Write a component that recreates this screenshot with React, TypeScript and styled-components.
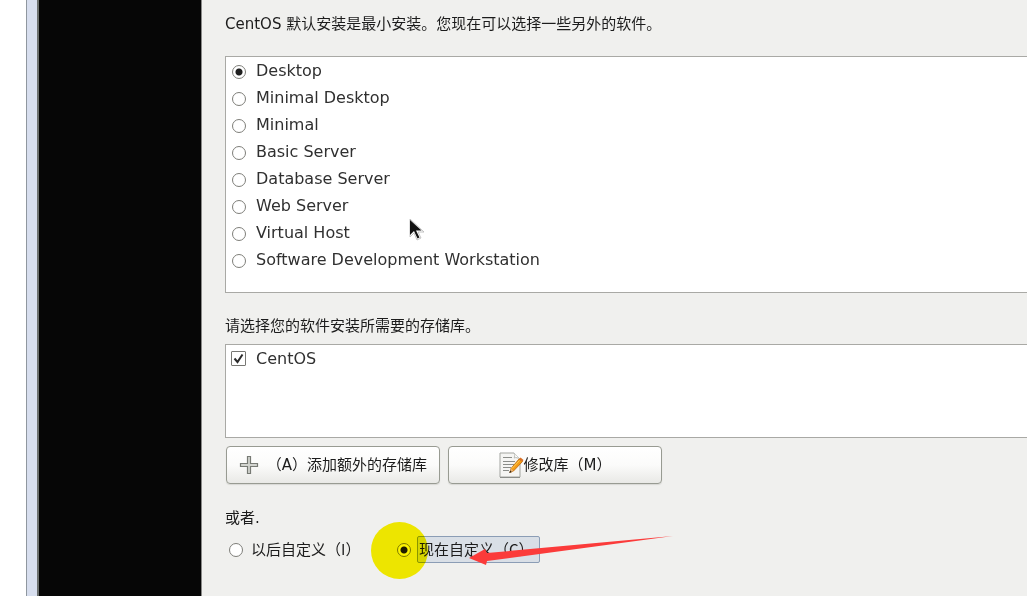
import React, { useState } from "react";
import styled, { createGlobalStyle } from "styled-components";

const GlobalStyle = createGlobalStyle`
  * { box-sizing: border-box; }
  html, body, #root { height: 100%; }
  body {
    margin: 0;
    overflow: hidden;
    background: #ffffff;
    color: #1c1c1c;
    font-family: "DejaVu Sans", "Noto Sans CJK SC", sans-serif;
    font-size: 15px;
    line-height: 20px;
  }
`;

const Screen = styled.div`
  display: flex;
  min-height: 100%;
  padding-left: 26px;
`;

const WindowFrame = styled.div`
  flex: none;
  width: 13px;
  background: #d7deee;
  border-left: 1px solid #8f979f;
  border-right: 2px solid #6c706f;
`;

const Backdrop = styled.div`
  flex: none;
  width: 162px;
  background: #060606;
`;

const Installer = styled.main`
  flex: 1;
  min-width: 0;
  display: flex;
  flex-direction: column;
  padding: 14px 0 0 23px;
  background: #f0f0ee;
  border-left: 1px solid #8a8a88;
`;

const Message = styled.p<{ $above?: number; $below: number }>`
  margin: ${(p) => p.$above ?? 0}px 0 ${(p) => p.$below}px;
  white-space: nowrap;
`;

const ListBox = styled.div<{ $height: number }>`
  position: relative;
  height: ${(p) => p.$height}px;
  background: #ffffff;
  border: 1px solid #a9a9a5;
  border-right: 0;
`;

const ListRow = styled.label`
  display: flex;
  align-items: center;
  gap: 10px;
  height: 27px;
  padding-left: 6px;
  color: #303030;
  font-size: 16px;
`;

const Radio = styled.input`
  appearance: none;
  flex: none;
  width: 14px;
  height: 14px;
  margin: 2px 0 0;
  border: 1px solid #7e7e79;
  border-radius: 50%;
  background: #ffffff;
  &:checked {
    background: radial-gradient(circle, #1f1f1f 3px, #ffffff 4px);
  }
`;

const CheckHolder = styled.span`
  position: relative;
  display: flex;
  margin-left: -1px;
  svg {
    position: absolute;
    inset: 0;
    pointer-events: none;
  }
`;

const Checkbox = styled.input`
  appearance: none;
  width: 15px;
  height: 15px;
  margin: 0;
  border: 1px solid #777773;
  border-radius: 1px;
  background: #ffffff;
`;

const Pointer = styled.svg`
  position: absolute;
  left: 183px;
  top: 162px;
`;

const Buttons = styled.div`
  display: flex;
  gap: 8px;
  margin: 8px 0 24px 1px;
`;

const PushButton = styled.button<{ $gap: number }>`
  display: flex;
  align-items: center;
  justify-content: center;
  gap: ${(p) => p.$gap}px;
  width: 214px;
  height: 38px;
  padding: 0;
  border: 1px solid #989b92;
  border-radius: 4px;
  background: linear-gradient(#ffffff, #fbfbfa 50%, #e9e9e6);
  box-shadow: 0 1px 1px #d8d8d4;
  color: #1c1c1c;
  font: inherit;
  white-space: nowrap;
`;

const Choices = styled.div`
  display: flex;
  align-items: center;
  gap: 36px;
  padding-left: 4px;
`;

const Choice = styled.label`
  position: relative;
  display: flex;
  align-items: center;
  gap: 6px;
  white-space: nowrap;
  ${Radio} { margin-top: 0; }
`;

const ChoiceText = styled.span<{ $focused?: boolean }>`
  width: ${(p) => (p.$focused ? 123 : 112)}px;
  height: 27px;
  padding: 2px 1px;
  border: 1px solid ${(p) => (p.$focused ? "#8b9db5" : "transparent")};
  border-radius: 2px;
  background: ${(p) => (p.$focused ? "#d9dfe6" : "transparent")};
  font-family: "Noto Sans CJK SC", sans-serif;
`;

const Highlight = styled.span`
  position: absolute;
  left: -26px;
  top: -14px;
  width: 57px;
  height: 57px;
  border-radius: 50%;
  background: #fcf400;
  mix-blend-mode: multiply;
  pointer-events: none;
`;

const Arrow = styled.svg`
  position: absolute;
  left: 72px;
  top: 0;
  pointer-events: none;
`;

const packages = [
  "Desktop",
  "Minimal Desktop",
  "Minimal",
  "Basic Server",
  "Database Server",
  "Web Server",
  "Virtual Host",
  "Software Development Workstation",
];

const PlusIcon = () => (
  <svg width="20" height="20" viewBox="0 0 20 20" aria-hidden="true">
    <path
      d="M8.5 1.5h3v7h7v3h-7v7h-3v-7h-7v-3h7z"
      fill="#d2d4cf"
      stroke="#777a74"
      strokeWidth="1.2"
    />
  </svg>
);

const EditIcon = () => (
  <svg width="25" height="26" viewBox="0 0 25 26" aria-hidden="true">
    <path d="M1 1h14l6 6v18H1z" fill="#f5f5f3" stroke="#a3a5a0" />
    <path d="M15 1c1 2 1 4 0 5 2-1 4 0 6 1" fill="#ffffff" stroke="#b9bbb6" />
    <path d="M4 5.500h9M4 9.500h12M4 12.500h11M4 15.500h8M4 18.500h6" stroke="#8b8d89" />
    <path d="M1 25.500h20" stroke="#8b8d89" />
    <path d="M20 7l3.500 2.500-9 9.500-3.500 1.500 1-4z" fill="#f59b16" stroke="#b8650b" strokeWidth=".8" />
    <path d="M20.500 8.500l-7.500 8" stroke="#ffd04d" />
    <path d="M12 16.500l2.500 2.500-3.500 1.500z" fill="#e6b47a" />
    <path d="M11.300 18.500l1.500 1.500-2.800 1z" fill="#33271a" />
    <path d="M20 7l1.500-1.500 3 2.500-1 1.500z" fill="#d96f25" />
  </svg>
);

export default function App() {
  const [selected, setSelected] = useState("Desktop");
  const [repo, setRepo] = useState(true);
  const [when, setWhen] = useState("now");

  return (
    <>
      <GlobalStyle />
      <Screen>
        <WindowFrame />
        <Backdrop />
        <Installer>
          <Message $below={22}>CentOS 默认安装是最小安装。您现在可以选择一些另外的软件。</Message>
          <ListBox $height={237} role="radiogroup">
            {packages.map((name) => (
              <ListRow key={name}>
                <Radio
                  type="radio"
                  name="package"
                  checked={selected === name}
                  onChange={() => setSelected(name)}
                />
                {name}
              </ListRow>
            ))}
            <Pointer width="18" height="24" viewBox="0 0 18 24" aria-hidden="true">
              <path
                d="M1 0v18l4-4 3 7 4-2-3-6h6z"
                fill="#ffffff"
                stroke="#b5b5b5"
                strokeWidth=".8"
              />
              <path d="M1 1v15l4-4 3.500 7.500 2-1L7 11.500h5.500z" fill="#111111" />
            </Pointer>
          </ListBox>
          <Message $above={23} $below={8}>
            请选择您的软件安装所需要的存储库。
          </Message>
          <ListBox $height={94}>
            <ListRow>
              <CheckHolder>
                <Checkbox
                  type="checkbox"
                  checked={repo}
                  onChange={() => setRepo(!repo)}
                />
                {repo && (
                  <svg width="15" height="15" viewBox="0 0 15 15" aria-hidden="true">
                    <path d="M3.500 7.500l3 3.500 5-7.500" fill="none" stroke="#2b2b2b" strokeWidth="2" />
                  </svg>
                )}
              </CheckHolder>
              CentOS
            </ListRow>
          </ListBox>
          <Buttons>
            <PushButton type="button" $gap={8}>
              <PlusIcon />（A）添加额外的存储库
            </PushButton>
            <PushButton type="button" $gap={0}>
              <EditIcon />修改库（M）
            </PushButton>
          </Buttons>
          <Message $below={8}>或者.</Message>
          <Choices role="radiogroup">
            <Choice>
              <Radio
                type="radio"
                name="customize"
                checked={when === "later"}
                onChange={() => setWhen("later")}
              />
              <ChoiceText>以后自定义（I）</ChoiceText>
            </Choice>
            <Choice>
              <Radio
                type="radio"
                name="customize"
                checked={when === "now"}
                onChange={() => setWhen("now")}
              />
              <ChoiceText $focused>现在自定义（C）</ChoiceText>
              <Highlight />
              <Arrow width="206" height="30" viewBox="0 0 206 30" aria-hidden="true">
                <path d="M0 22L16 13l2 4L204 0 18 25l-1 4z" fill="#fb3b3a" />
              </Arrow>
            </Choice>
          </Choices>
        </Installer>
      </Screen>
    </>
  );
}
